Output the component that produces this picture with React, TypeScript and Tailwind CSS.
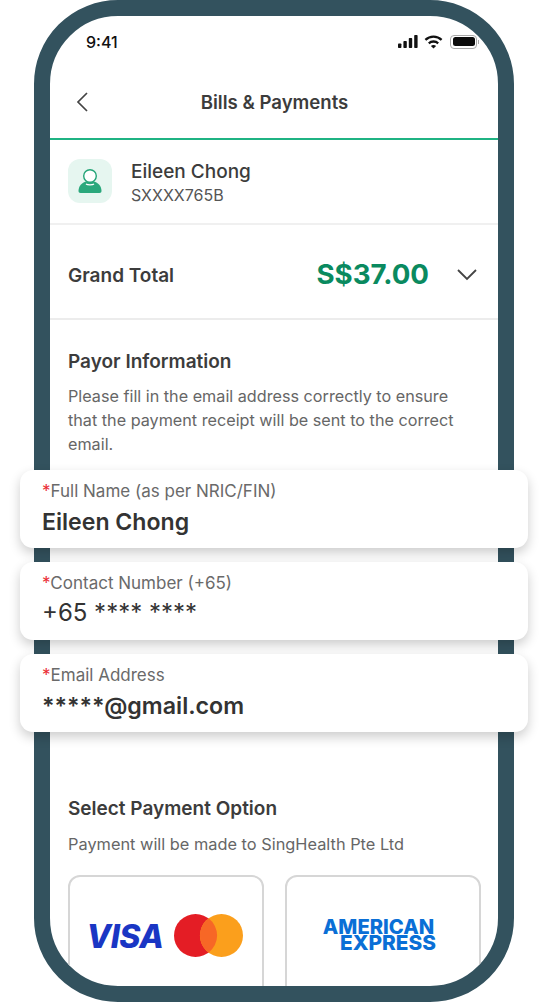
const FONT = "font-['Inter','Noto_Sans',sans-serif]"

function StatusIcons() {
  return (
    <div className="flex items-center gap-[4px]">
      {/* signal */}
      <svg width="20" height="13" viewBox="0 0 20 13" fill="#111">
        <rect x="0" y="8.5" width="3.4" height="4.5" rx="0.8" />
        <rect x="5.4" y="6" width="3.4" height="7" rx="0.8" />
        <rect x="10.8" y="3" width="3.4" height="10" rx="0.8" />
        <rect x="16.2" y="0" width="3.4" height="13" rx="0.8" />
      </svg>
      {/* wifi */}
      <svg width="19" height="14" viewBox="0 0 19 14" fill="none" stroke="#111" strokeWidth="2.3" className="ml-[2px]">
        <path d="M1.4 4.9C5.9 0.6 13.1 0.6 17.6 4.9" />
        <path d="M4.8 8.3C7.4 5.9 11.6 5.9 14.2 8.3" />
        <path d="M9.5 13.4L6.9 10.9C8.4 9.7 10.6 9.7 12.1 10.9Z" fill="#111" stroke="none" />
      </svg>
      {/* battery */}
      <div className="ml-[3px] flex items-center">
        <div className="h-[14px] w-[27px] rounded-[4px] border border-[#a9a9a9] p-[1.5px]">
          <div className="h-full w-full rounded-[2.5px] bg-[#0c0c0c]" />
        </div>
        <div className="ml-[1px] h-[4px] w-[1px] bg-[#a9a9a9]" />
      </div>
    </div>
  )
}

function FormCard({ label, value, valueClass }: { label: string; value: string; valueClass: string }) {
  return (
    <div className="flex h-[78px] flex-col rounded-[13px] bg-white pl-[22px] pt-[11px] shadow-[0_5px_12px_rgba(0,0,0,0.2)]">
      <div className="text-[17px] leading-[20px] text-[#6a6a6a]">
        <span className="text-[#ea2a33]">*</span>
        {label}
      </div>
      <div className={`text-[#333] ${valueClass}`}>{value}</div>
    </div>
  )
}

export default function App() {
  return (
    <div className={`relative h-[1002px] w-[548px] overflow-hidden bg-white ${FONT}`}>
      <div className="mx-[34px] h-[1002px] w-[480px] overflow-hidden rounded-[84px] border-[16px] border-[#33525e] bg-white">
        {/* status bar */}
        <div className="flex h-[53px] items-center justify-between pb-[2px] pl-[36px] pr-[19px]">
          <span className="text-[16px] font-medium text-[#111]">9:41</span>
          <StatusIcons />
        </div>

        {/* nav */}
        <div className="relative flex h-[71px] items-center justify-center border-b-2 border-[#1fb383] pb-[1px] pl-[1px]">
          <svg width="14" height="22" viewBox="0 0 14 22" fill="none" stroke="#444" strokeWidth="1.7" className="absolute left-[25px] top-[22px]">
            <path d="M12 2L3 11L12 20" />
          </svg>
          <span className="text-[18.6px] font-semibold text-[#3c3c3c]">Bills &amp; Payments</span>
        </div>

        {/* patient */}
        <div className="flex h-[85px] items-center gap-[19px] border-b-2 border-[#f0f0f0] pl-[18px]">
          <div className="mb-[2px] flex h-[44px] w-[44px] items-center justify-center rounded-[12px] bg-[#e6f6f0]">
            <svg width="24" height="24" viewBox="0 0 24 24">
              <path d="M0.5 22C0.5 17 4 13.5 8 12.5H16C20 13.5 23.5 17 23.5 22C23.5 23.2 22.8 24 21.5 24H2.5C1.2 24 0.5 23.2 0.5 22Z" fill="#2aa87c" />
              <circle cx="12" cy="7" r="6.3" fill="#fff" stroke="#23a477" strokeWidth="1.4" />
              <path d="M8 15C9.5 16.2 14.5 16.2 16 15" fill="none" stroke="#fff" strokeWidth="1.2" />
            </svg>
          </div>
          <div className="mt-[4px]">
            <div className="text-[19px] font-medium leading-[24px] text-[#3c3c3c]">Eileen Chong</div>
            <div className="text-[16px] leading-[23px] text-[#555]">SXXXX765B</div>
          </div>
        </div>

        {/* grand total */}
        <div className="flex h-[95px] items-center border-b-2 border-[#ececec] pl-[18px] pr-[20px] pt-[6px]">
          <span className="mt-[3px] text-[19px] font-semibold text-[#3c3c3c]">Grand Total</span>
          <span className="ml-auto text-[27.7px] font-bold text-[#0a8a5f]">S$37.00</span>
          <svg width="22" height="13" viewBox="0 0 22 13" fill="none" stroke="#444" strokeWidth="1.8" className="ml-[27px]">
            <path d="M2 2L11 11L20 2" />
          </svg>
        </div>

        {/* payor */}
        <div className="px-[18px] pt-[30px]">
          <h2 className="text-[19px] font-semibold leading-[24px] text-[#3c3c3c]">Payor Information</h2>
          <p className="mt-[10px] w-[395px] text-[16.2px] leading-[24px] text-[#666]">
            Please fill in the email address correctly to ensure that the payment receipt will be sent to the correct email.
          </p>
        </div>

        {/* payment, below the overlaid form cards */}
        <div className="pl-[18px] pr-[17px] pt-[341px]">
          <h2 className="text-[19px] font-semibold leading-[24px] text-[#3c3c3c]">Select Payment Option</h2>
          <p className="mt-[11px] text-[16.35px] leading-[24px] text-[#666]">Payment will be made to SingHealth Pte Ltd</p>
          <div className="mt-[19px] flex gap-[21px]">
            <div className="flex h-[140px] w-[196px] items-start justify-center gap-[11px] rounded-[12px] border-2 border-[#d6d6d6] pr-[2px] pt-[37px]">
              <span className="text-[32px] font-extrabold italic leading-[46px] tracking-[-0.5px] text-[#1a36c4]">VISA</span>
              <svg width="69" height="43" viewBox="0 0 69 43">
                <circle cx="21.5" cy="21.5" r="21.5" fill="#e41d25" />
                <circle cx="47.5" cy="21.5" r="21.5" fill="#fb9f1c" />
                <path d="M34.5 4.3A21.5 21.5 0 0 1 34.5 38.7A21.5 21.5 0 0 1 34.5 4.3Z" fill="#f76726" />
              </svg>
            </div>
            <div className="flex h-[140px] w-[196px] flex-col items-center rounded-[12px] border-2 border-[#d6d6d6] pr-[9px] pt-[42px] text-[#0a6fd6]">
              <span className="text-[20.2px] font-extrabold leading-[16px]">AMERICAN</span>
              <span className="pl-[19px] text-[20.8px] font-extrabold leading-[16px]">EXPRESS</span>
            </div>
          </div>
        </div>
      </div>

      {/* form cards sit over the phone frame */}
      <div className="absolute left-[20px] top-[470px] flex w-[508px] flex-col gap-[14px]">
        <FormCard label="Full Name (as per NRIC/FIN)" value="Eileen Chong" valueClass="mt-[6px] text-[23.1px] leading-[30px] font-semibold" />
        <FormCard label="Contact Number (+65)" value="+65 **** ****" valueClass="mt-[5px] text-[24px] leading-[30px] font-normal" />
        <FormCard label="Email Address" value="*****@gmail.com" valueClass="mt-[6px] text-[23.2px] leading-[30px] font-semibold" />
      </div>
    </div>
  )
}
